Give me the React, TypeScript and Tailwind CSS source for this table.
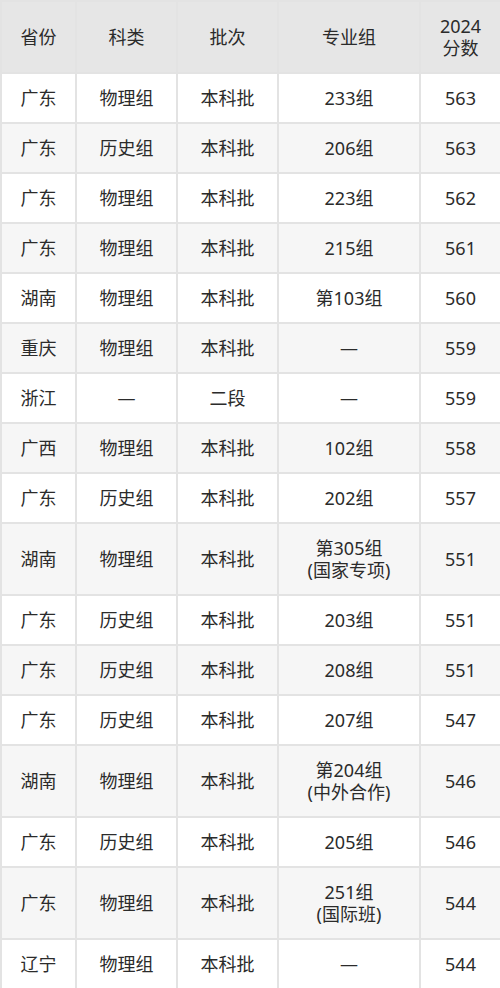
import React from "react";

type Row = [string, string, string, string[], string];

const rows: Row[] = [
  ["广东", "物理组", "本科批", ["233组"], "563"],
  ["广东", "历史组", "本科批", ["206组"], "563"],
  ["广东", "物理组", "本科批", ["223组"], "562"],
  ["广东", "物理组", "本科批", ["215组"], "561"],
  ["湖南", "物理组", "本科批", ["第103组"], "560"],
  ["重庆", "物理组", "本科批", ["—"], "559"],
  ["浙江", "—", "二段", ["—"], "559"],
  ["广西", "物理组", "本科批", ["102组"], "558"],
  ["广东", "历史组", "本科批", ["202组"], "557"],
  ["湖南", "物理组", "本科批", ["第305组", "(国家专项)"], "551"],
  ["广东", "历史组", "本科批", ["203组"], "551"],
  ["广东", "历史组", "本科批", ["208组"], "551"],
  ["广东", "历史组", "本科批", ["207组"], "547"],
  ["湖南", "物理组", "本科批", ["第204组", "(中外合作)"], "546"],
  ["广东", "历史组", "本科批", ["205组"], "546"],
  ["广东", "物理组", "本科批", ["251组", "(国际班)"], "544"],
  ["辽宁", "物理组", "本科批", ["—"], "544"],
];

const cell = "border-2 border-[#e3e3e3] text-center align-middle p-0";

export default function App() {
  return (
    <div
      className="w-[500px] h-[988px] bg-white text-[#2b2b2b] text-[18px] leading-[22px] overflow-hidden"
      style={{ fontFamily: '"Noto Sans", "Noto Sans CJK SC", sans-serif' }}
    >
      <table className="w-[500px] table-fixed border-collapse">
        <colgroup>
          <col className="w-[75px]" />
          <col className="w-[101px]" />
          <col className="w-[101px]" />
          <col className="w-[142px]" />
          <col className="w-[81px]" />
        </colgroup>
        <thead>
          <tr className="h-[72px] bg-[#e6e6e6]">
            <th className={`${cell} font-normal`}>省份</th>
            <th className={`${cell} font-normal`}>科类</th>
            <th className={`${cell} font-normal`}>批次</th>
            <th className={`${cell} font-normal`}>专业组</th>
            <th className={`${cell} font-normal`}>
              <div>2024</div>
              <div>分数</div>
            </th>
          </tr>
        </thead>
        <tbody>
          {rows.map((r, i) => (
            <tr
              key={i}
              className={`${r[3].length > 1 ? "h-[72px]" : "h-[50px]"} ${
                i % 2 === 1 ? "bg-[#f6f6f6]" : "bg-white"
              }`}
            >
              <td className={cell}>{r[0]}</td>
              <td className={cell}>{r[1]}</td>
              <td className={cell}>{r[2]}</td>
              <td className={cell}>
                {r[3].map((l, j) => (
                  <div key={j}>{l}</div>
                ))}
              </td>
              <td className={cell}>{r[4]}</td>
            </tr>
          ))}
        </tbody>
      </table>
    </div>
  );
}
